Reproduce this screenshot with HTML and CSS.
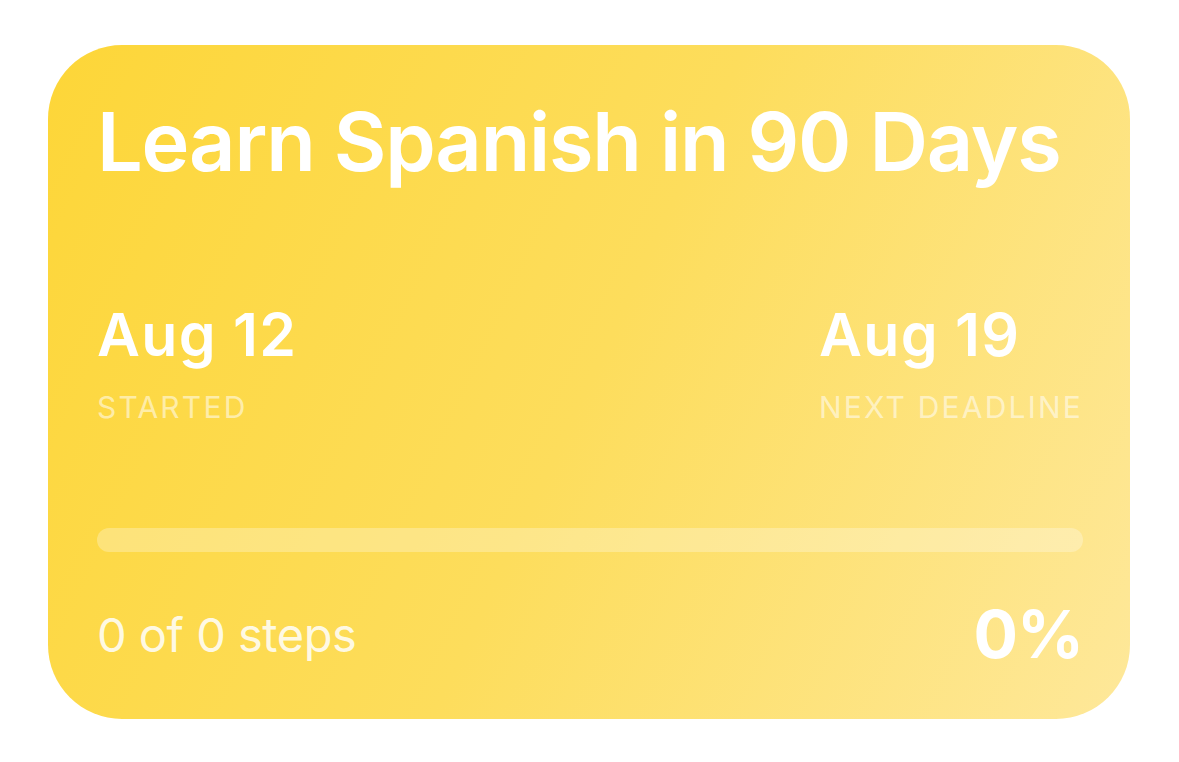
FILE: index.html
```html
<!DOCTYPE html>
<html lang="en">
<head>
<meta charset="utf-8">
<title>Learn Spanish in 90 Days</title>
<link rel="stylesheet" href="styles.css">
</head>
<body>
  <div class="card">
    <h1 class="title">Learn Spanish in 90 Days</h1>
    <div class="dates">
      <div class="date">
        <div class="date-value">Aug 12</div>
        <div class="date-label">STARTED</div>
      </div>
      <div class="date">
        <div class="date-value">Aug 19</div>
        <div class="date-label">NEXT DEADLINE</div>
      </div>
    </div>
    <div class="track"><div class="fill" style="width:0%"></div></div>
    <div class="footer">
      <span class="steps">0 of 0 steps</span>
      <span class="percent">0%</span>
    </div>
  </div>
</body>
</html>
```

FILE: styles.css
```css
html, body {
  margin: 0;
  padding: 0;
  background: #ffffff;
}
body {
  font-family: Inter, "Noto Sans", "Liberation Sans", sans-serif;
  color: #ffffff;
}
.card {
  box-sizing: border-box;
  margin: 45px 0 0 48px;
  width: 1082px;
  height: 674px;
  border-radius: 74px;
  background: linear-gradient(115deg, #fdd638 0%, #fddd5c 50%, #fee89a 100%);
  padding: 57px 47px 0 49px;
  display: flex;
  flex-direction: column;
}
.title {
  margin: 0;
  font-size: 81px;
  line-height: 1;
  font-weight: 600;
  letter-spacing: -1.2px;
  white-space: nowrap;
}
.dates {
  margin-top: 122px;
  display: flex;
  justify-content: space-between;
}
.date {
  display: flex;
  flex-direction: column;
}
.date:last-child {
  width: 264px;
}
.date-value {
  font-size: 59px;
  line-height: 1;
  font-weight: 600;
  letter-spacing: 1.3px;
}
.date-label {
  margin-top: 28px;
  font-size: 30px;
  line-height: 1;
  font-weight: 400;
  color: rgba(255, 255, 255, 0.55);
  letter-spacing: 2.2px;
  white-space: nowrap;
}
.track {
  margin-top: 106px;
  height: 24px;
  border-radius: 12px;
  background: rgba(255, 255, 255, 0.28);
  overflow: hidden;
}
.fill {
  height: 100%;
  background: #ffffff;
}
.footer {
  margin-top: 49px;
  display: flex;
  justify-content: space-between;
  align-items: center;
}
.steps {
  font-size: 47px;
  line-height: 1;
  font-weight: 400;
  letter-spacing: -0.5px;
  color: rgba(255, 255, 255, 0.85);
}
.percent {
  font-size: 66px;
  line-height: 1;
  font-weight: 700;
  letter-spacing: -1px;
}
```
